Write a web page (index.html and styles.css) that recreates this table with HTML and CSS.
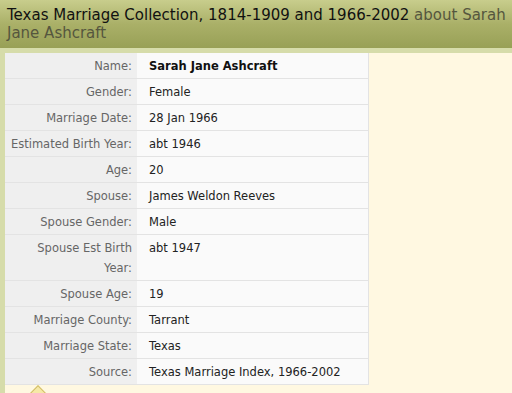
FILE: index.html
```html
<!DOCTYPE html>
<html>
<head>
<meta charset="utf-8">
<link rel="stylesheet" href="styles.css">
</head>
<body>
<div class="header">
  <h1 class="title">Texas Marriage Collection, 1814-1909 and 1966-2002 <span class="about">about Sarah Jane Ashcraft</span></h1>
</div>
<div class="frame">
  <div class="content">
    <table class="record">
      <tr><th>Name:</th><td class="strong">Sarah Jane Ashcraft</td></tr>
      <tr><th>Gender:</th><td>Female</td></tr>
      <tr><th>Marriage Date:</th><td>28 Jan 1966</td></tr>
      <tr><th>Estimated Birth Year:</th><td>abt 1946</td></tr>
      <tr><th>Age:</th><td>20</td></tr>
      <tr><th>Spouse:</th><td>James Weldon Reeves</td></tr>
      <tr><th>Spouse Gender:</th><td>Male</td></tr>
      <tr><th>Spouse Est Birth Year:</th><td>abt 1947</td></tr>
      <tr><th>Spouse Age:</th><td>19</td></tr>
      <tr><th>Marriage County:</th><td>Tarrant</td></tr>
      <tr><th>Marriage State:</th><td>Texas</td></tr>
      <tr><th>Source:</th><td>Texas Marriage Index, 1966-2002</td></tr>
    </table>
    <div class="tip"><span class="diamond"></span></div>
  </div>
</div>
</body>
</html>
```
FILE: styles.css
```css
html, body {
  margin: 0;
  padding: 0;
  background: #fff8e1;
  overflow: hidden;
  height: 393px;
}
.header {
  background: linear-gradient(to bottom, #c8cd8c 0%, #aab068 50%, #98a056 100%);
  padding: 6px 4px 6px 7px;
  height: 36px;
}
.title {
  margin: 0;
  font-family: "DejaVu Sans", Verdana, sans-serif;
  font-weight: normal;
  font-size: 15px;
  line-height: 18px;
  color: #111;
}
.about {
  color: #55563e;
}
.frame {
  background: #d6dcaa;
  padding: 5px 0 0 5px;
}
.content {
  background: #fff8e1;
  height: 400px;
}
.record {
  border-collapse: collapse;
  font-family: "DejaVu Sans", Verdana, sans-serif;
  font-size: 11.5px;
  width: 364px;
}
.record th, .record td {
  line-height: 20px;
  padding: 3px 0 2px 0;
  border-bottom: 1px solid #e3e3e3;
  vertical-align: top;
}
.record th {
  width: 122px;
  background: #efefef;
  color: #666;
  font-weight: normal;
  text-align: right;
  padding-right: 5px;
  padding-left: 5px;
}
.record td {
  background: #fafafa;
  color: #222;
  padding-left: 12px;
  border-right: 1px solid #e3e3e3;
}
.record td.strong {
  font-weight: bold;
  color: #111;
}
.tip {
  padding-left: 26px;
  height: 20px;
}
.diamond {
  display: block;
  width: 12px;
  height: 12px;
  margin-top: 3px;
  background: #f6e9a6;
  border: 1px solid #d2bd6a;
  transform: rotate(45deg);
}
```
